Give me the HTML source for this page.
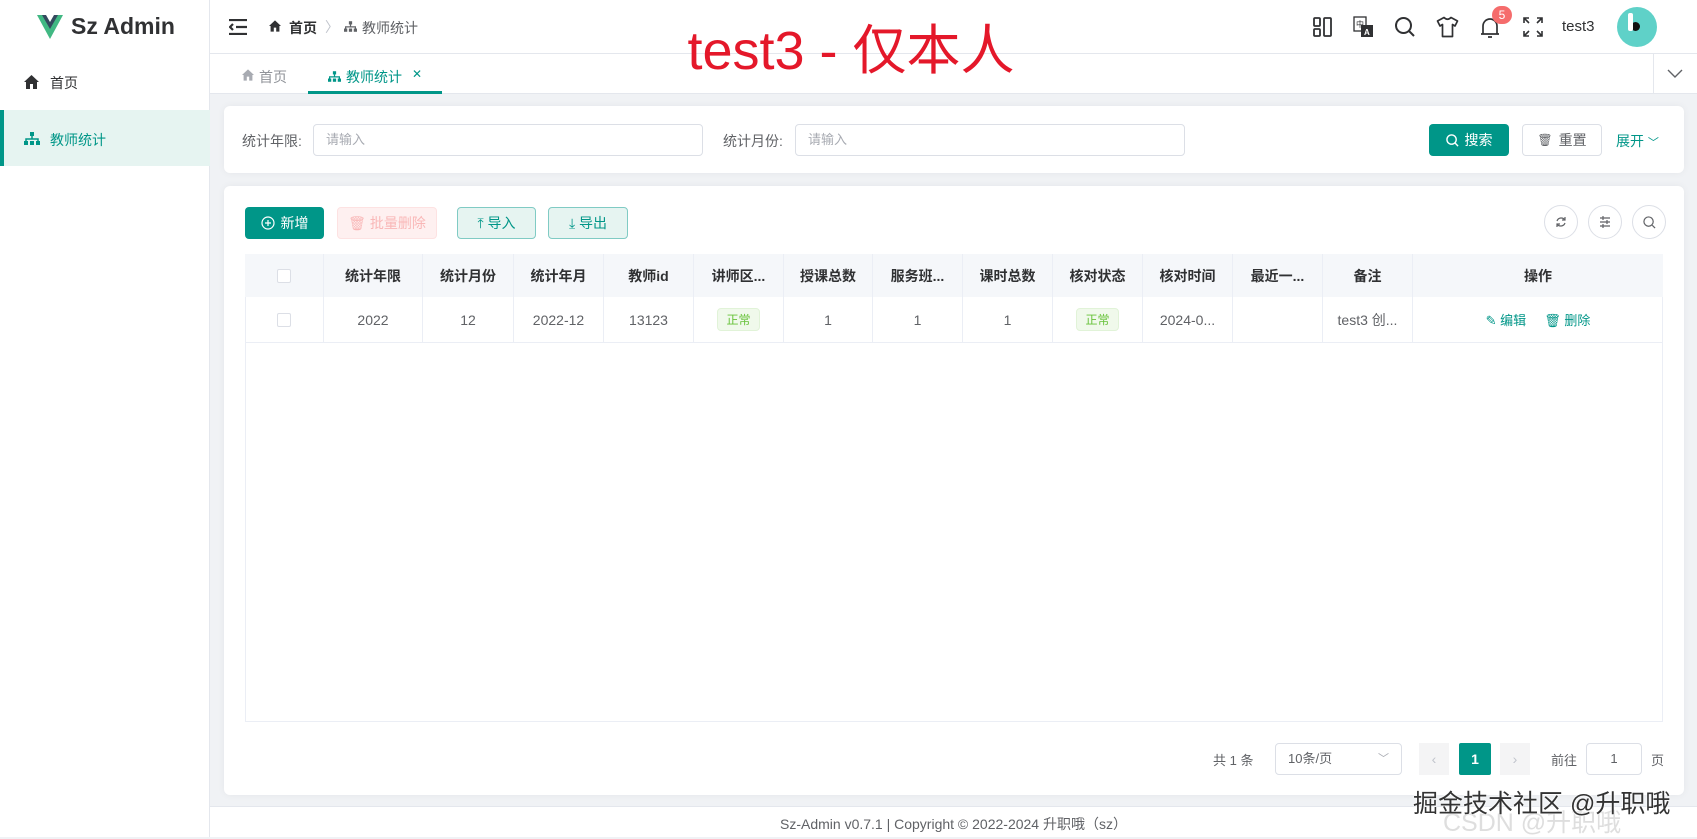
<!DOCTYPE html>
<html><head><meta charset="utf-8"><style>
*{box-sizing:border-box;margin:0;padding:0}
body{width:1697px;height:837px;overflow:hidden;background:#f0f2f5;font-family:"Liberation Sans","Noto Sans CJK SC",sans-serif;font-size:14px;color:#303133;position:relative}
.a{position:absolute}
.side{left:0;top:0;width:210px;height:837px;background:#fff;border-right:1px solid #e4e7ed}
.hdr{left:210px;top:0;width:1487px;height:54px;background:#fff;border-bottom:1px solid #e4e7ed}
.tabs{left:210px;top:54px;width:1487px;height:40px;background:#fff;border-bottom:1px solid #e4e7ed}
.card{background:#fff;border-radius:6px;box-shadow:0 0 8px rgba(0,0,0,.05)}
.inp{height:32px;border:1px solid #dcdfe6;border-radius:4px;color:#a8abb2;font-size:13px;padding-left:12px;line-height:30px}
.btn{height:32px;border-radius:4px;font-size:14px;display:flex;align-items:center;justify-content:center;gap:6px}
.th,.td{position:absolute;display:flex;align-items:center;justify-content:center;border-right:1px solid #ebeef5}
.th{top:254px;height:43px;background:#f5f7fa;font-weight:bold;color:#303133;font-size:14px}
.td{top:297px;height:45px;color:#606266;font-size:14px}
.tag{background:#f0f9eb;border:1px solid #e1f3d8;color:#67c23a;font-size:12px;padding:2px 8px;border-radius:4px}
.cb{width:14px;height:14px;border:1px solid #dcdfe6;border-radius:2px;background:#fff}
.circ{width:34px;height:34px;border:1px solid #dcdfe6;border-radius:50%;display:flex;align-items:center;justify-content:center}
</style></head><body>
<div class="a side"></div>
<svg class="a" style="left:37px;top:14px" width="26" height="26" viewBox="0 0 26 26"><path d="M0 1h7l6 11 6-11h7L13 25z" fill="#41b883"/><path d="M5 1h4l4 7 4-7h4L13 15z" fill="#34495e"/></svg>
<div class="a" style="left:71px;top:13px;font-size:23px;font-weight:bold;color:#303133">Sz Admin</div>
<svg class="a" style="left:24px;top:75px" width="15" height="14" viewBox="0 0 15 14"><path d="M7.5 0L0 7h2v7h4V9h3v5h4V7h2z" fill="#303133"/></svg>
<div class="a" style="left:50px;top:73px;font-size:14px">首页</div>
<div class="a" style="left:0;top:110px;width:210px;height:56px;background:#e6f4f1;border-left:4px solid #009688"></div>
<svg class="a" style="left:24px;top:132px" width="16" height="13" viewBox="0 0 16 13"><rect x="6" y="0" width="4" height="4" fill="#009688"/><path d="M8 4v3M2 10V7h12v3" stroke="#009688" stroke-width="1.5" fill="none"/><rect x="0" y="9" width="4" height="4" fill="#009688"/><rect x="6" y="9" width="4" height="4" fill="#009688"/><rect x="12" y="9" width="4" height="4" fill="#009688"/></svg>
<div class="a" style="left:50px;top:130px;color:#009688">教师统计</div>

<div class="a hdr"></div>
<svg class="a" style="left:229px;top:19px" width="18" height="16" viewBox="0 0 18 16"><path d="M0 1h18M7 8h11M0 15h18M4 5L1 8l3 3" stroke="#303133" stroke-width="2.2" fill="none"/></svg>
<svg class="a" style="left:269px;top:20px" width="12" height="12" viewBox="0 0 15 14"><path d="M7.5 0L0 7h2v7h4V9h3v5h4V7h2z" fill="#303133"/></svg>
<div class="a" style="left:289px;top:18px;font-weight:bold;font-size:14px">首页</div>
<div class="a" style="left:325px;top:17px;color:#c0c4cc">〉</div>
<svg class="a" style="left:344px;top:21px" width="13" height="11" viewBox="0 0 16 13"><rect x="6" y="0" width="4" height="4" fill="#606266"/><path d="M8 4v3M2 10V7h12v3" stroke="#606266" stroke-width="1.5" fill="none"/><rect x="0" y="9" width="4" height="4" fill="#606266"/><rect x="6" y="9" width="4" height="4" fill="#606266"/><rect x="12" y="9" width="4" height="4" fill="#606266"/></svg>
<div class="a" style="left:362px;top:18px;color:#606266">教师统计</div>

<svg class="a" style="left:1313px;top:17px" width="20" height="20" viewBox="0 0 20 20" fill="none" stroke="#303133" stroke-width="1.8"><rect x="1" y="1" width="6" height="8" rx="1"/><rect x="1" y="12" width="6" height="7" rx="1"/><rect x="11" y="1" width="7" height="18" rx="1"/></svg>
<svg class="a" style="left:1353px;top:16px" width="21" height="22" viewBox="0 0 21 22"><rect x="1" y="1" width="12" height="14" fill="#fff" stroke="#303133" stroke-width="1.3"/><text x="3" y="11" font-size="8" fill="#303133">中</text><rect x="8" y="9" width="12" height="12" fill="#303133"/><text x="11" y="19" font-size="8" fill="#fff" font-weight="bold">A</text></svg>
<svg class="a" style="left:1394px;top:16px" width="22" height="22" viewBox="0 0 22 22" fill="none" stroke="#303133" stroke-width="2"><circle cx="9.5" cy="9.5" r="7.5"/><path d="M15 15l5 5"/></svg>
<svg class="a" style="left:1436px;top:16px" width="23" height="22" viewBox="0 0 23 22" fill="none" stroke="#303133" stroke-width="1.7" stroke-linejoin="round"><path d="M8 1.5Q11.5 5 15 1.5L21.5 5 19 10l-2.5-1.5V20.5h-10V8.5L4 10 1.5 5z"/></svg>
<svg class="a" style="left:1480px;top:16px" width="20" height="23" viewBox="0 0 20 23" fill="none" stroke="#303133" stroke-width="1.7"><path d="M3 18V10a7 7 0 0114 0v8zM1 18h18M8 21h4"/></svg>
<div class="a" style="left:1492px;top:6px;width:20px;height:18px;border-radius:9px;background:#f56c6c;color:#fff;font-size:12px;text-align:center;line-height:18px">5</div>
<svg class="a" style="left:1523px;top:17px" width="20" height="20" viewBox="0 0 20 20" fill="none" stroke="#303133" stroke-width="1.6"><path d="M1 6V1h5M1 1l5 5M14 1h5v5M19 1l-5 5M1 14v5h5M1 19l5-5M19 14v5h-5M19 19l-5-5"/></svg>
<div class="a" style="left:1562px;top:18px;font-size:15px">test3</div>
<div class="a" style="left:1617px;top:7px;width:40px;height:40px;border-radius:50%;background:#5fd1c8"></div>
<div class="a" style="left:1631px;top:22px;width:9px;height:9px;border-radius:50%;background:#111"></div>
<div class="a" style="left:1628px;top:13px;width:5px;height:18px;background:#fff;border-radius:2px"></div>

<div class="a tabs"></div>
<svg class="a" style="left:242px;top:69px" width="12" height="12" viewBox="0 0 15 14"><path d="M7.5 0L0 7h2v7h4V9h3v5h4V7h2z" fill="#a8abb2"/></svg>
<div class="a" style="left:259px;top:67px;color:#909399">首页</div>
<div class="a" style="left:308px;top:91px;width:134px;height:3px;background:#009688"></div>
<svg class="a" style="left:328px;top:71px" width="13" height="11" viewBox="0 0 16 13"><rect x="6" y="0" width="4" height="4" fill="#009688"/><path d="M8 4v3M2 10V7h12v3" stroke="#009688" stroke-width="1.5" fill="none"/><rect x="0" y="9" width="4" height="4" fill="#009688"/><rect x="6" y="9" width="4" height="4" fill="#009688"/><rect x="12" y="9" width="4" height="4" fill="#009688"/></svg>
<div class="a" style="left:346px;top:67px;color:#009688">教师统计</div>
<div class="a" style="left:412px;top:67px;color:#009688;font-size:12px">✕</div>
<div class="a" style="left:1653px;top:54px;width:44px;height:40px;border-left:1px solid #e4e7ed"></div>
<svg class="a" style="left:1667px;top:69px" width="16" height="10" viewBox="0 0 16 10" fill="none" stroke="#606266" stroke-width="1.4"><path d="M1 1l7 7 7-7"/></svg>

<div class="a" style="left:0;top:20px;width:1702px;text-align:center;font-size:54px;color:#e4182a;line-height:62px">test3 - 仅本人</div>

<div class="a card" style="left:224px;top:106px;width:1460px;height:67px"></div>
<div class="a" style="left:242px;top:131px;color:#606266">统计年限:</div>
<div class="a inp" style="left:313px;top:124px;width:390px">请输入</div>
<div class="a" style="left:723px;top:131px;color:#606266">统计月份:</div>
<div class="a inp" style="left:795px;top:124px;width:390px">请输入</div>
<div class="a btn" style="left:1429px;top:124px;width:80px;background:#009688;color:#fff"><svg width="13" height="13" viewBox="0 0 14 14" fill="none" stroke="#fff" stroke-width="1.5"><circle cx="6" cy="6" r="5"/><path d="M10 10l3 3"/></svg>搜索</div>
<div class="a btn" style="left:1522px;top:124px;width:80px;border:1px solid #dcdfe6;color:#606266"><span style="font-size:12px">🗑</span>重置</div>
<div class="a" style="left:1616px;top:131px;color:#009688">展开 <span style="font-size:11px">﹀</span></div>

<div class="a card" style="left:224px;top:186px;width:1460px;height:609px"></div>
<div class="a btn" style="left:245px;top:207px;width:79px;background:#009688;color:#fff"><svg width="14" height="14" viewBox="0 0 14 14" fill="none" stroke="#fff" stroke-width="1.2"><circle cx="7" cy="7" r="6"/><path d="M7 4v6M4 7h6"/></svg>新增</div>
<div class="a btn" style="left:337px;top:207px;width:100px;background:#fef0f0;border:1px solid #fde2e2;color:#f9b7b7">🗑 批量删除</div>
<div class="a btn" style="left:457px;top:207px;width:79px;background:#e6f4f1;border:1px solid #80cbc4;color:#009688">⤒ 导入</div>
<div class="a btn" style="left:548px;top:207px;width:80px;background:#e6f4f1;border:1px solid #80cbc4;color:#009688">⤓ 导出</div>
<div class="a circ" style="left:1544px;top:205px"><svg width="12" height="12" viewBox="0 0 12 12" fill="none" stroke="#606266" stroke-width="1.2"><path d="M10 4A4.5 4.5 0 002 5M2 8a4.5 4.5 0 008-1M10 1v3H7M2 11V8h3"/></svg></div>
<div class="a circ" style="left:1588px;top:205px"><svg width="12" height="12" viewBox="0 0 12 12" stroke="#606266" stroke-width="1.2"><path d="M1 2h10M1 6h10M1 10h10M4 0v4M8 4v4M4 8v4"/></svg></div>
<div class="a circ" style="left:1632px;top:205px"><svg width="13" height="13" viewBox="0 0 14 14" fill="none" stroke="#606266" stroke-width="1.3"><circle cx="6" cy="6" r="5"/><path d="M10 10l3 3"/></svg></div>

<div class="a" style="left:245px;top:254px;width:1418px;height:468px;border:1px solid #ebeef5;border-top:none"></div>
<div class="th" style="left:245px;width:79px"><div class="cb"></div></div>
<div class="th" style="left:324px;width:99px">统计年限</div>
<div class="th" style="left:423px;width:91px">统计月份</div>
<div class="th" style="left:514px;width:90px">统计年月</div>
<div class="th" style="left:604px;width:90px">教师id</div>
<div class="th" style="left:694px;width:90px">讲师区...</div>
<div class="th" style="left:784px;width:89px">授课总数</div>
<div class="th" style="left:873px;width:90px">服务班...</div>
<div class="th" style="left:963px;width:90px">课时总数</div>
<div class="th" style="left:1053px;width:90px">核对状态</div>
<div class="th" style="left:1143px;width:90px">核对时间</div>
<div class="th" style="left:1233px;width:90px">最近一...</div>
<div class="th" style="left:1323px;width:90px">备注</div>
<div class="th" style="left:1413px;width:250px;border-right:none">操作</div>

<div class="td" style="left:245px;width:79px"><div class="cb"></div></div>
<div class="td" style="left:324px;width:99px">2022</div>
<div class="td" style="left:423px;width:91px">12</div>
<div class="td" style="left:514px;width:90px">2022-12</div>
<div class="td" style="left:604px;width:90px">13123</div>
<div class="td" style="left:694px;width:90px"><span class="tag">正常</span></div>
<div class="td" style="left:784px;width:89px">1</div>
<div class="td" style="left:873px;width:90px">1</div>
<div class="td" style="left:963px;width:90px">1</div>
<div class="td" style="left:1053px;width:90px"><span class="tag">正常</span></div>
<div class="td" style="left:1143px;width:90px">2024-0...</div>
<div class="td" style="left:1233px;width:90px"></div>
<div class="td" style="left:1323px;width:90px">test3 创...</div>
<div class="td" style="left:1413px;width:250px;border-right:none;color:#009688;font-size:13px">✎ 编辑&nbsp;&nbsp;&nbsp;&nbsp;&nbsp;🗑 删除</div>
<div class="a" style="left:245px;top:342px;width:1418px;height:1px;background:#ebeef5"></div>

<div class="a" style="left:1213px;top:750px;color:#606266;font-size:13px">共 1 条</div>
<div class="a inp" style="left:1275px;top:743px;width:127px;color:#606266">10条/页<span style="float:right;margin-right:12px;color:#a8abb2;font-size:11px">﹀</span></div>
<div class="a" style="left:1419px;top:743px;width:30px;height:32px;background:#f4f4f5;color:#c0c4cc;text-align:center;line-height:32px">‹</div>
<div class="a" style="left:1459px;top:743px;width:32px;height:32px;background:#009688;color:#fff;border-radius:2px;text-align:center;line-height:32px;font-weight:bold">1</div>
<div class="a" style="left:1500px;top:743px;width:30px;height:32px;background:#f4f4f5;color:#c0c4cc;text-align:center;line-height:32px">›</div>
<div class="a" style="left:1551px;top:750px;color:#606266;font-size:13px">前往</div>
<div class="a inp" style="left:1586px;top:743px;width:56px;color:#606266;padding:0;text-align:center">1</div>
<div class="a" style="left:1651px;top:750px;color:#606266;font-size:13px">页</div>

<div class="a" style="left:210px;top:806px;width:1487px;height:31px;background:#fff;border-top:1px solid #e4e7ed"></div>
<div class="a" style="left:210px;top:814px;width:1487px;text-align:center;color:#606266;font-size:14px">Sz-Admin v0.7.1 | Copyright © 2022-2024 升职哦（sz）</div>
<div class="a" style="left:1443px;top:803px;font-size:25px;color:rgba(200,200,200,.6)">CSDN @升职哦</div>
<div class="a" style="left:1413px;top:784px;font-size:25px;color:#333;text-shadow:0 0 2px #fff,0 0 2px #fff">掘金技术社区 @升职哦</div>
</body></html>
